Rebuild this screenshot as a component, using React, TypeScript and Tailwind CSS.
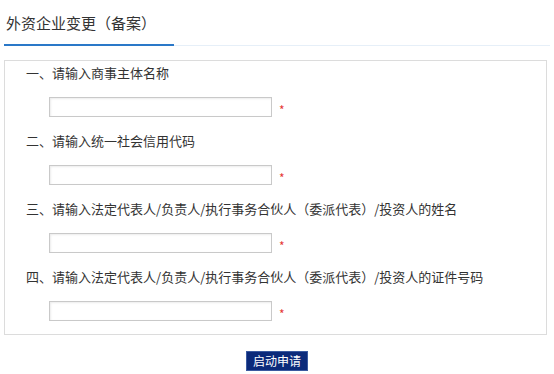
const fields = [
  { no: '一', label: '请输入商事主体名称' },
  { no: '二', label: '请输入统一社会信用代码' },
  { no: '三', label: '请输入法定代表人/负责人/执行事务合伙人（委派代表）/投资人的姓名' },
  { no: '四', label: '请输入法定代表人/负责人/执行事务合伙人（委派代表）/投资人的证件号码' },
]

export default function App() {
  return (
    <div className="w-[554px] h-[374px] overflow-hidden bg-white text-[#333] font-['Microsoft_YaHei','Noto_Sans_CJK_SC',sans-serif]">
      <div className="mx-[4px] border-b border-[#e6eff8]">
        <div className="w-[170px] h-[46px] pl-[2px] pt-[3px] flex items-center border-b-2 border-[#2a78c8] text-[15px] text-[#333] -mb-px">
          外资企业变更（备案）
        </div>
      </div>
      <div className="mx-[4px] mt-[14px] w-[543px] border border-[#dcdcdc] pt-[2px]">
        {fields.map((f, i) => (
          <div key={f.no} className={i === fields.length - 1 ? 'pb-[13px]' : 'pb-[14px]'}>
            <div className="h-[20px] pl-[21px] flex items-center text-[13px] text-[#333]">
              {f.no}、{f.label}
            </div>
            <div className="mt-[14px] h-[20px] pl-[44px] flex items-center">
              <input
                type="text"
                className="w-[223px] h-[20px] border border-[#c9c9c9] bg-white shadow-[inset_1px_1px_2px_rgba(0,0,0,0.08)] outline-none px-1 text-[12px]"
              />
              <span className="ml-[7px] pt-[6px] text-[12px] leading-none text-[#e53935]">*</span>
            </div>
          </div>
        ))}
      </div>
      <div className="flex justify-center mt-[16px]">
        <button className="w-[62px] h-[20px] bg-[#0b2a7a] text-white text-[12px] leading-none border border-[#3a5aa0]">
          启动申请
        </button>
      </div>
    </div>
  )
}
